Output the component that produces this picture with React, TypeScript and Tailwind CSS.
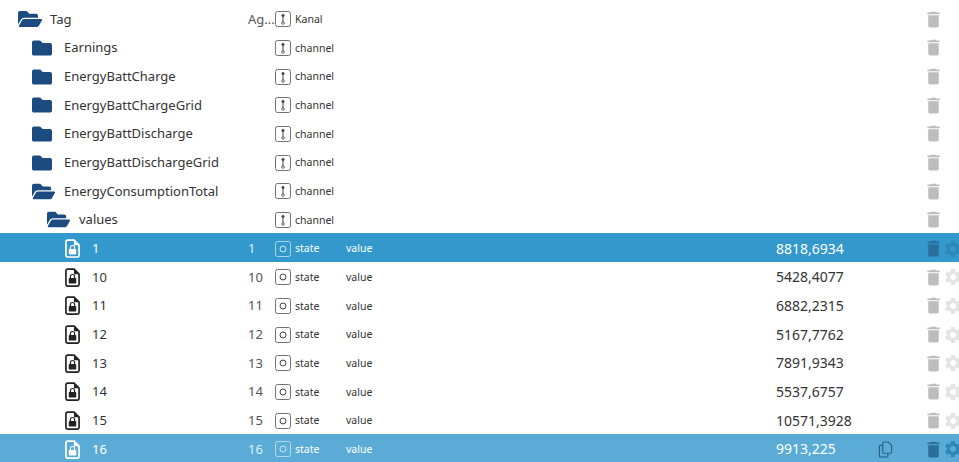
import React from 'react';
import { FaFolder, FaFolderOpen } from 'react-icons/fa';
import { MdDelete, MdSettings } from 'react-icons/md';

type RowData = {
  name: string;
  indent: number;
  icon: 'open' | 'closed' | 'file';
  short?: string;
  type: 'channel' | 'state';
  typeLabel: string;
  role?: string;
  value?: string;
  tone?: 'selected' | 'hover';
};

const rows: RowData[] = [
  { name: 'Tag', indent: 0, icon: 'open', short: 'Ag...', type: 'channel', typeLabel: 'Kanal' },
  { name: 'Earnings', indent: 1, icon: 'closed', type: 'channel', typeLabel: 'channel' },
  { name: 'EnergyBattCharge', indent: 1, icon: 'closed', type: 'channel', typeLabel: 'channel' },
  { name: 'EnergyBattChargeGrid', indent: 1, icon: 'closed', type: 'channel', typeLabel: 'channel' },
  { name: 'EnergyBattDischarge', indent: 1, icon: 'closed', type: 'channel', typeLabel: 'channel' },
  { name: 'EnergyBattDischargeGrid', indent: 1, icon: 'closed', type: 'channel', typeLabel: 'channel' },
  { name: 'EnergyConsumptionTotal', indent: 1, icon: 'open', type: 'channel', typeLabel: 'channel' },
  { name: 'values', indent: 2, icon: 'open', type: 'channel', typeLabel: 'channel' },
  { name: '1', indent: 3, icon: 'file', short: '1', type: 'state', typeLabel: 'state', role: 'value', value: '8818,6934', tone: 'selected' },
  { name: '10', indent: 3, icon: 'file', short: '10', type: 'state', typeLabel: 'state', role: 'value', value: '5428,4077' },
  { name: '11', indent: 3, icon: 'file', short: '11', type: 'state', typeLabel: 'state', role: 'value', value: '6882,2315' },
  { name: '12', indent: 3, icon: 'file', short: '12', type: 'state', typeLabel: 'state', role: 'value', value: '5167,7762' },
  { name: '13', indent: 3, icon: 'file', short: '13', type: 'state', typeLabel: 'state', role: 'value', value: '7891,9343' },
  { name: '14', indent: 3, icon: 'file', short: '14', type: 'state', typeLabel: 'state', role: 'value', value: '5537,6757' },
  { name: '15', indent: 3, icon: 'file', short: '15', type: 'state', typeLabel: 'state', role: 'value', value: '10571,3928' },
  { name: '16', indent: 3, icon: 'file', short: '16', type: 'state', typeLabel: 'state', role: 'value', value: '9913,225', tone: 'hover' },
];

function FileLock() {
  return (
    <svg viewBox="0 0 16 20" className="h-[19px] w-[15px]" fill="none">
      <path d="M2.8 1h6.9L15 6.3v11a1.8 1.8 0 0 1-1.8 1.8H2.8A1.8 1.8 0 0 1 1 17.300V2.800A1.800 1.800 0 0 1 2.800 1Z" stroke="currentColor" strokeWidth="1.800" />
      <path d="M9.500 1v5.500H15" fill="currentColor" />
      <rect x="4" y="10.500" width="8" height="6" rx="0.800" fill="currentColor" />
      <path d="M5.800 10.500V9a2.200 2.200 0 0 1 4.400 0v1.500" stroke="currentColor" strokeWidth="1.300" />
    </svg>
  );
}

function ChannelIcon() {
  return (
    <svg viewBox="0 0 16 16" className="h-4 w-4" fill="none" stroke="currentColor">
      <rect x="0.500" y="0.500" width="15" height="15" rx="2" strokeWidth="1" opacity="0.75" />
      <path d="M8 4v7" strokeWidth="1" />
      <circle cx="8" cy="4.500" r="1.300" fill="currentColor" strokeWidth="0.500" />
      <circle cx="8" cy="12" r="1.300" strokeWidth="0.800" />
    </svg>
  );
}

function StateIcon() {
  return (
    <svg viewBox="0 0 16 16" className="h-4 w-4" fill="none" stroke="currentColor">
      <rect x="0.500" y="0.500" width="15" height="15" rx="2" strokeWidth="1" opacity="0.75" />
      <circle cx="8" cy="8" r="3" strokeWidth="1" />
    </svg>
  );
}

function CopyIcon() {
  return (
    <svg viewBox="0 0 16 18" className="h-[17px] w-[15px]" fill="none" stroke="#2a6388" strokeWidth="1.300">
      <path d="M6 1h5l3.500 3.500V12a1 1 0 0 1-1 1H6a1 1 0 0 1-1-1V2a1 1 0 0 1 1-1Z" />
      <path d="M5 4.500H2.500a1 1 0 0 0-1 1V16a1 1 0 0 0 1 1h7a1 1 0 0 0 1-1v-3" />
    </svg>
  );
}

function Row({ row }: { row: RowData }) {
  const selected = row.tone === 'selected';
  const hover = row.tone === 'hover';
  const active = selected || hover;
  const bg = selected ? 'bg-[#3399cc]' : hover ? 'bg-[#5aabd6]' : 'bg-white';
  const text = active ? 'text-white' : 'text-[#333333]';
  const indentClass = ['pl-[18px]', 'pl-[32px]', 'pl-[47px]', 'pl-[65px]'][row.indent];
  const gapClass = row.icon === 'file' ? 'w-[27px]' : 'w-[32px]';

  return (
    <div className={`flex h-[28.67px] items-center pt-[2px] ${bg} ${text}`}>
      <div className={`flex w-[248px] shrink-0 items-center ${indentClass}`}>
        <span className={`flex ${gapClass} shrink-0 items-center`}>
          {row.icon === 'file' && (
            <span className={active ? 'text-white' : 'text-[#222222]'}>
              <FileLock />
            </span>
          )}
          {row.icon === 'open' && <FaFolderOpen className="text-[#1b4b7f]" size={row.indent === 0 ? 24 : 23} />}
          {row.icon === 'closed' && <FaFolder className="text-[#1b4b7f]" size={20} />}
        </span>
        <span className="text-[13px] leading-none whitespace-nowrap">{row.name}</span>
      </div>
      <div className={`w-[27px] shrink-0 text-[13px] leading-none ${active ? 'text-[#dff0fa]' : 'text-[#555555]'}`}>{row.short}</div>
      <div className="flex w-[71px] shrink-0 items-center gap-1">
        <span className={active ? 'text-[#cfe8f7]' : 'text-[#444444]'}>
          {row.type === 'channel' ? <ChannelIcon /> : <StateIcon />}
        </span>
        <span className="text-[10.500px] leading-none">{row.typeLabel}</span>
      </div>
      <div className="w-[430px] shrink-0 text-[10.500px] leading-none">{row.role}</div>
      <div className="w-[102px] shrink-0 text-[14px] leading-none">{row.value}</div>
      <div className="w-[45px] shrink-0">{hover && <CopyIcon />}</div>
      <div className="flex shrink-0 items-center">
        <MdDelete size={21} className={active ? 'text-[#2a6f9b]' : 'text-[#bdbdbd]'} />
        {row.type === 'state' && (
          <MdSettings size={20} className={`-ml-px ${active ? 'text-[#2f87b8]' : 'text-[#e4e4e4]'}`} />
        )}
      </div>
    </div>
  );
}

export default function App() {
  return (
    <div className="h-[462px] w-[959px] overflow-hidden bg-white pt-1 font-['Noto_Sans','Open_Sans',sans-serif]">
      {rows.map((row) => (
        <Row key={row.name} row={row} />
      ))}
    </div>
  );
}
